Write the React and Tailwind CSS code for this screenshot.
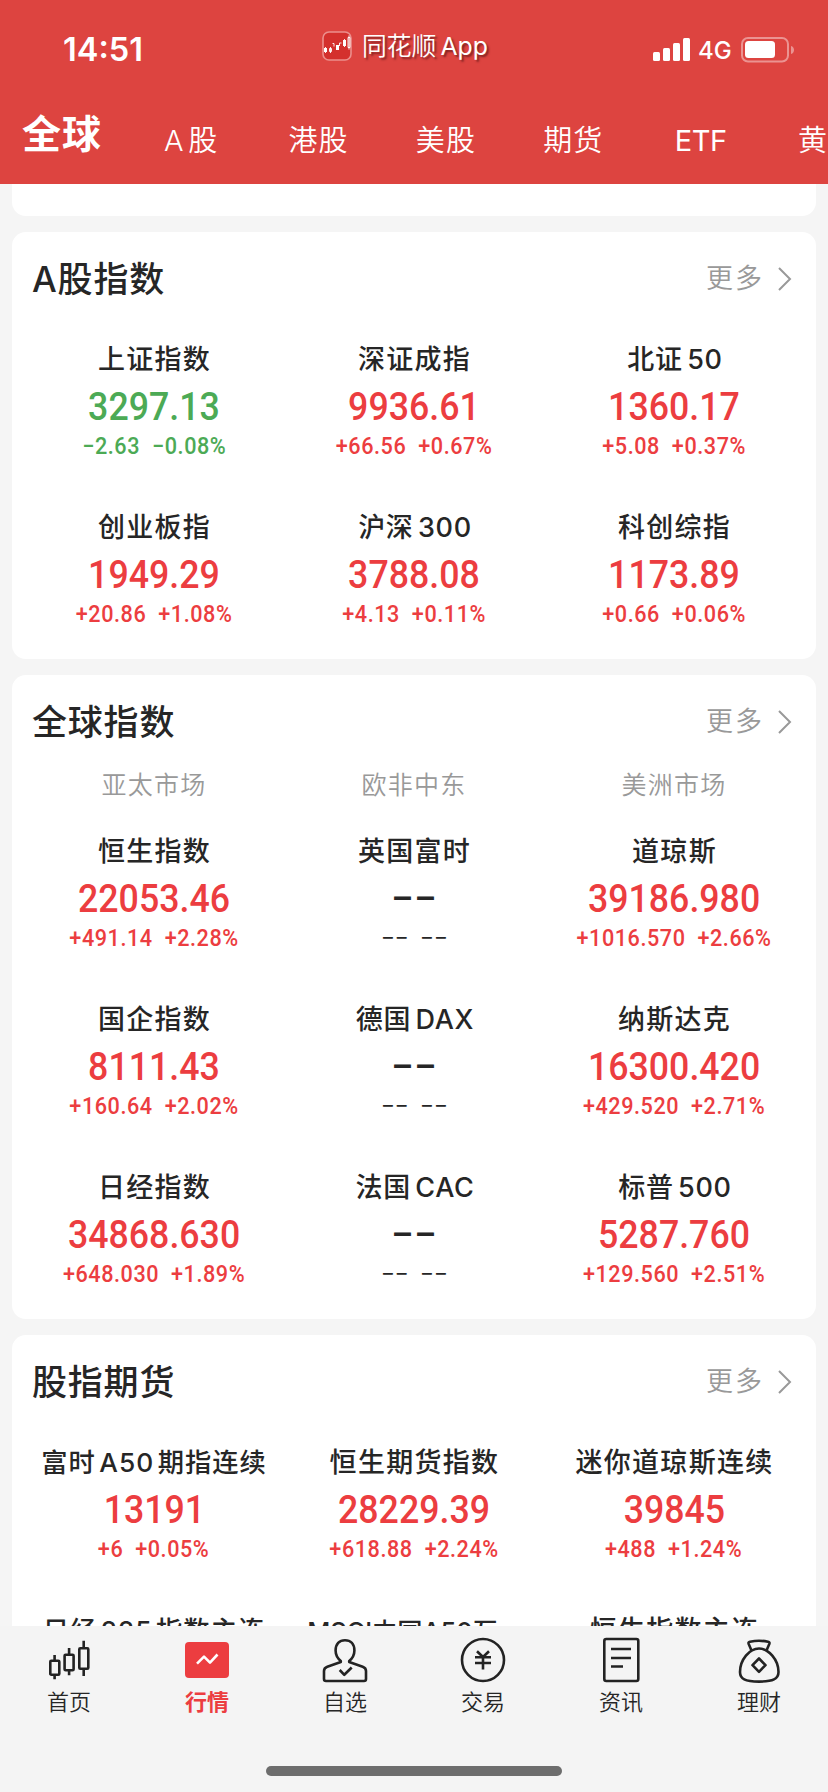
import { clsx } from 'clsx';

const markets = ['A 股', '港股', '美股', '期货', 'ETF', '黄金'];

const aShares = [
  { name: '上证指数', price: '3297.13', change: '−2.63', percent: '−0.08%' },
  { name: '深证成指', price: '9936.61', change: '+66.56', percent: '+0.67%' },
  { name: '北证 50', price: '1360.17', change: '+5.08', percent: '+0.37%' },
  { name: '创业板指', price: '1949.29', change: '+20.86', percent: '+1.08%' },
  { name: '沪深 300', price: '3788.08', change: '+4.13', percent: '+0.11%' },
  { name: '科创综指', price: '1173.89', change: '+0.66', percent: '+0.06%' },
];

const globalIndexes = [
  { name: '恒生指数', price: '22053.46', change: '+491.14', percent: '+2.28%' },
  { name: '英国富时', price: '−−', change: '−−', percent: '−−' },
  { name: '道琼斯', price: '39186.980', change: '+1016.570', percent: '+2.66%' },
  { name: '国企指数', price: '8111.43', change: '+160.64', percent: '+2.02%' },
  { name: '德国 DAX', price: '−−', change: '−−', percent: '−−' },
  { name: '纳斯达克', price: '16300.420', change: '+429.520', percent: '+2.71%' },
  { name: '日经指数', price: '34868.630', change: '+648.030', percent: '+1.89%' },
  { name: '法国 CAC', price: '−−', change: '−−', percent: '−−' },
  { name: '标普 500', price: '5287.760', change: '+129.560', percent: '+2.51%' },
];

const futures = [
  { name: '富时 A50 期指连续', price: '13191', change: '+6', percent: '+0.05%', long: true },
  { name: '恒生期货指数', price: '28229.39', change: '+618.88', percent: '+2.24%' },
  { name: '迷你道琼斯连续', price: '39845', change: '+488', percent: '+1.24%' },
  { name: '日经 225 指数主连', long: true },
  { name: 'MSCI中国A50互...', small: true },
  { name: '恒生指数主连' },
];

function Quote({ item }) {
  const empty = item.price === '−−';
  const down = item.change?.startsWith('−') && !empty;
  const latin = / [A-Z0-9]+$/.test(item.name);
  return (
    <div
      className={clsx(
        'flex h-[120px] flex-col items-center whitespace-nowrap',
        empty ? 'text-[#262626]' : down ? 'text-[#4caa55]' : 'text-[#ec3d40]'
      )}
    >
      <div
        className={clsx(
          'h-[41px] font-medium text-[#262626]',
          item.small && 'text-[25.3px] leading-[46px]',
          item.long && 'text-[26.3px] leading-[43px] tracking-[1px] [word-spacing:-4.5px]',
          latin && 'pl-0.5 text-[27px] leading-[43px] tracking-[0.7px] [word-spacing:-3.5px]',
          !item.small && !item.long && !latin && 'pl-px text-[27px] leading-[43px] tracking-[1.3px]'
        )}
      >
        {item.name}
      </div>
      <div
        className={clsx(
          'h-[55px] font-[Roboto] text-[39px] font-medium leading-[56px]',
          empty ? 'scale-x-[1.04]' : 'scale-x-[0.915]'
        )}
      >
        {item.price}
      </div>
      <div
        className={clsx(
          'flex h-6 font-[Roboto] text-[23.5px] leading-[25px]',
          empty ? 'scale-x-[1.03] gap-[11px]' : 'scale-x-[0.92] gap-[13px] font-medium tracking-[0.6px]'
        )}
      >
        <span>{item.change}</span>
        <span>{item.percent}</span>
      </div>
    </div>
  );
}

function Section({ title, items, regions }) {
  return (
    <section className="shrink-0 rounded-[14px] bg-white px-3 pb-[33px]">
      <div className="flex h-[94px] items-center justify-between pl-2 pr-3">
        <h2 className="text-[35px] font-medium tracking-[0.8px] text-[#262626]">{title}</h2>
        <div className="flex items-center gap-[14px] text-[#999]">
          <span className="font-[350] text-[27px] tracking-[2px]">更多</span>
          <svg width="14" height="24" viewBox="0 0 14 24" fill="none" stroke="currentColor" strokeWidth="2">
            <path d="M1 1l11 11L1 23" />
          </svg>
        </div>
      </div>
      {regions && (
        <div className="mb-[29px] grid h-8 grid-cols-3 text-center font-[350] text-[25px] leading-8 tracking-[1.3px] text-[#999]">
          {regions.map((region) => (
            <span key={region}>{region}</span>
          ))}
        </div>
      )}
      <div className={clsx('grid grid-cols-3 gap-y-12', !regions && 'pt-3')}>
        {items.map((item) => (
          <Quote key={item.name} item={item} />
        ))}
      </div>
    </section>
  );
}

function StatusBar() {
  return (
    <div className="flex h-[92px] items-start">
      <div className="w-[322px] pl-[63px] pt-[30px] text-[32.5px] font-semibold leading-10">14:51</div>
      <div className="flex w-[331px] items-center pt-[30px]">
        <svg width="30" height="30" viewBox="0 0 30 30" fill="none">
          <rect x="1" y="1" width="28" height="28" rx="6" fill="#d4302d" stroke="#eb8f8c" strokeWidth="1.6" />
          <path d="M2 17h3v4H2zM14 14h3v5h-3zM21 9h3v6h-3z" fill="#fff" />
          <path d="M3.500 16v6M7.500 17.500h2v3h-2zM8.500 16v6M10.500 12.500h1.500v3M17.500 15v-3h2M22.500 8v8M26 6.500h2v10h-2zM27 4.500v14" stroke="#fff" strokeWidth="0.9" />
        </svg>
        <span className="ml-[10px] flex gap-1 text-[24.8px] leading-8 [text-shadow:2px_2px_2px_rgba(90,20,20,0.7)]">
          <span className="font-[350]">同花顺</span>
          <span>App</span>
        </span>
      </div>
      <svg className="mt-[37px]" width="38" height="26" viewBox="0 0 38 26" fill="#fff">
        <rect x="0" y="15" width="7" height="9" rx="1.5" />
        <rect x="10" y="11" width="7" height="13" rx="1.5" />
        <rect x="20" y="6" width="7" height="18" rx="1.5" />
        <rect x="30" y="1" width="7" height="23" rx="1.5" />
      </svg>
      <span className="ml-[7px] mt-[35px] w-[43px] text-[24px] font-medium leading-8">4G</span>
      <svg className="mt-[37px]" width="54" height="26" viewBox="0 0 54 26" fill="none">
        <rect x="1" y="1" width="46" height="23.5" rx="6" stroke="#eb9391" strokeWidth="2" />
        <rect x="4" y="4" width="30" height="17" rx="3.5" fill="#fff" />
        <path d="M50 9c4 1 4 7 0 8z" fill="#eb9391" />
      </svg>
    </div>
  );
}

const tabs = [
  {
    label: '首页',
    icon: (
      <>
        <rect x="5.3" y="24.7" width="9" height="14" rx="1" />
        <rect x="19.6" y="18.7" width="9" height="15.6" rx="1" />
        <rect x="34.3" y="12.3" width="9" height="20.4" rx="1" />
        <path d="M9.6 19v5.7M9.6 38.7v4.6M24.1 12v6.7M24.1 34.3v5M38.7 4.7v7.6M38.7 32.7V40" />
      </>
    ),
  },
  {
    label: '行情',
    active: true,
    icon: (
      <>
        <rect x="2" y="6" width="44" height="36" rx="4" fill="#ec3d40" stroke="none" />
        <path d="M14 27.6l7-7 6 6L34.5 18.5" stroke="#fff" />
      </>
    ),
  },
  {
    label: '自选',
    icon: (
      <>
        <path d="M19.8 25c-3.7-3-5.2-6-5.2-10.500C14.600 8 18.300 4.200 24 4.200s9.400 3.800 9.400 10.300c0 4.500-1.500 7.500-5.200 10.500v1l13.500 4.700c2 .7 3.300 1.900 3.300 4.300v8c0 1.200-.8 2-2 2H5c-1.200 0-2-.8-2-2v-8c0-2.400 1.300-3.600 3.300-4.300L19.800 26z" />
        <path d="M18.700 34l4.600 4.800 7.400-7.300" />
      </>
    ),
  },
  {
    label: '交易',
    icon: (
      <>
        <circle cx="24" cy="24" r="21" />
        <path d="M18 15.300l6 5.700 6-5.700M16 21.300h16M16 27h16M24 21v12.500" />
      </>
    ),
  },
  {
    label: '资讯',
    icon: (
      <>
        <rect x="7.300" y="3" width="34" height="42" rx="2" />
        <path d="M14 13h20M14 22h20M14 30.500h12" />
      </>
    ),
  },
  {
    label: '理财',
    icon: (
      <>
        <path d="M16.500 14.500L13.700 8c-.5-1.300 0-2 1.300-2.300 5-1 13-1 18 0 1.300.3 1.800 1 1.300 2.300l-2.800 6.500" />
        <path d="M24 12.500c-9.500 0-19 11-19 23.500 0 7 5 9.600 19 9.600S43.500 43 43.500 36C43.500 23.500 33.500 12.500 24 12.500z" />
        <path d="M24 22.500l6.500 6.700L24 35.800l-6.500-6.600z" />
      </>
    ),
  },
];

function TabBar() {
  return (
    <nav className="flex h-[166px] shrink-0 flex-col items-center justify-between bg-[#f4f4f4] pb-4 pt-[10px]">
      <div className="grid w-full grid-cols-6">
        {tabs.map((tab) => (
          <div key={tab.label} className="flex flex-col items-center">
            <svg
              width="48"
              height="48"
              viewBox="0 0 48 48"
              fill="none"
              stroke="#232323"
              strokeWidth="2.6"
              strokeLinejoin="round"
            >
              {tab.icon}
            </svg>
            <span
              className={clsx(
                'mt-0.5 text-[22px] leading-8',
                tab.active ? 'font-bold text-[#ec3d40]' : 'font-[350] text-[#262626]'
              )}
            >
              {tab.label}
            </span>
          </div>
        ))}
      </div>
      <div className="h-[10px] w-[296px] rounded-full bg-[#6d6d6d]" />
    </nav>
  );
}

export default function App() {
  return (
    <div className="flex h-[1792px] w-[828px] flex-col overflow-hidden bg-[#f5f5f5] font-[Inter,'Noto_Sans_CJK_SC',sans-serif]">
      <header className="h-[184px] shrink-0 bg-[#dd4440] text-white">
        <StatusBar />
        <div className="flex items-start overflow-hidden whitespace-nowrap">
          <span className="w-[127px] shrink-0 pl-[22px] text-[39px] font-bold leading-[84px] tracking-[1px]">全球</span>
          {markets.map((market) => (
            <span
              key={market}
              className={clsx(
                'w-[127.4px] shrink-0 pl-px text-center text-[29px] leading-[97px] [word-spacing:-6px]',
                market === 'ETF' ? 'tracking-[-0.5px]' : 'font-[350] tracking-[1.2px]'
              )}
            >
              {market}
            </span>
          ))}
        </div>
      </header>
      <main className="flex min-h-0 flex-1 flex-col gap-4 overflow-hidden px-3">
        <div className="h-8 shrink-0 rounded-b-[14px] bg-white" />
        <Section title="A股指数" items={aShares} />
        <Section title="全球指数" items={globalIndexes} regions={['亚太市场', '欧非中东', '美洲市场']} />
        <Section title="股指期货" items={futures} />
      </main>
      <TabBar />
    </div>
  );
}
